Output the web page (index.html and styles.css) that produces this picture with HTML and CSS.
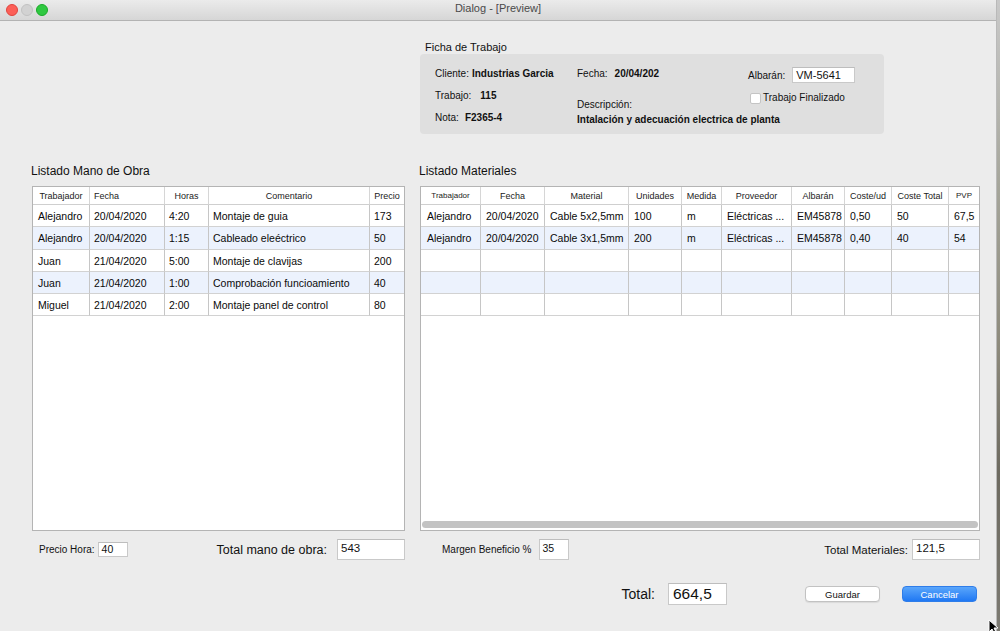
FILE: index.html
```html
<!DOCTYPE html>
<html lang="es">
<head>
<meta charset="utf-8">
<title>Dialog - [Preview]</title>
<link rel="stylesheet" href="styles.css">
</head>
<body>
<div class="screen">
  <div class="window">
    <header class="titlebar">
      <div class="lights">
        <span class="light red"></span><span class="light off"></span><span class="light green"></span>
      </div>
      <div class="title">Dialog - [Preview]</div>
    </header>
    <main class="content">
      <section class="ficha">
        <h2 class="ficha-title">Ficha de Trabajo</h2>
        <div class="ficha-box">
          <div class="fcol c1">
            <div class="line">Cliente:<b class="v v-cli">Industrias Garcia</b></div>
            <div class="line">Trabajo:<b class="v v-tra">115</b></div>
            <div class="line">Nota:<b class="v v-nota">F2365-4</b></div>
          </div>
          <div class="fcol c2">
            <div class="line">Fecha:<b class="v v-fecha">20/04/202</b></div>
            <div class="line desc-label">Descripción:</div>
            <div class="line desc"><b>Intalación y adecuación electrica de planta</b></div>
          </div>
          <div class="fcol c3">
            <div class="albaran"><span>Albarán:</span><span class="field f-alb">VM-5641</span></div>
            <div class="check"><span class="cbox"></span><span>Trabajo Finalizado</span></div>
          </div>
        </div>
      </section>

      <div class="lists">
        <section class="panel mano">
          <h3 class="panel-title">Listado Mano de Obra</h3>
          <div class="grid-box">
            <table class="grid">
              <colgroup>
                <col style="width:57px"><col style="width:75px"><col style="width:44px"><col style="width:161px"><col style="width:34px">
              </colgroup>
              <thead>
                <tr><th>Trabajador</th><th class="left">Fecha</th><th>Horas</th><th>Comentario</th><th>Precio</th></tr>
              </thead>
              <tbody>
                <tr><td>Alejandro</td><td>20/04/2020</td><td>4:20</td><td>Montaje de guia</td><td>173</td></tr>
                <tr class="alt tall"><td>Alejandro</td><td>20/04/2020</td><td>1:15</td><td>Cableado eleéctrico</td><td>50</td></tr>
                <tr><td>Juan</td><td>21/04/2020</td><td>5:00</td><td>Montaje de clavijas</td><td>200</td></tr>
                <tr class="alt"><td>Juan</td><td>21/04/2020</td><td>1:00</td><td>Comprobación funcioamiento</td><td>40</td></tr>
                <tr><td>Miguel</td><td>21/04/2020</td><td>2:00</td><td>Montaje panel de control</td><td>80</td></tr>
              </tbody>
            </table>
          </div>
        </section>

        <section class="panel mat">
          <h3 class="panel-title">Listado Materiales</h3>
          <div class="grid-box">
            <table class="grid">
              <colgroup>
                <col style="width:60px"><col style="width:64px"><col style="width:84px"><col style="width:53px"><col style="width:40px"><col style="width:70px"><col style="width:53px"><col style="width:47px"><col style="width:57px"><col style="width:30px">
              </colgroup>
              <thead>
                <tr><th class="tiny">Trabajador</th><th>Fecha</th><th>Material</th><th>Unidades</th><th>Medida</th><th>Proveedor</th><th>Albarán</th><th>Coste/ud</th><th>Coste Total</th><th class="tiny">PVP</th></tr>
              </thead>
              <tbody>
                <tr><td class="p6">Alejandro</td><td>20/04/2020</td><td>Cable 5x2,5mm</td><td>100</td><td>m</td><td>Eléctricas ...</td><td>EM45878</td><td>0,50</td><td>50</td><td>67,5</td></tr>
                <tr class="alt tall"><td class="p6">Alejandro</td><td>20/04/2020</td><td>Cable 3x1,5mm</td><td>200</td><td>m</td><td>Eléctricas ...</td><td>EM45878</td><td>0,40</td><td>40</td><td>54</td></tr>
                <tr><td></td><td></td><td></td><td></td><td></td><td></td><td></td><td></td><td></td><td></td></tr>
                <tr class="alt"><td></td><td></td><td></td><td></td><td></td><td></td><td></td><td></td><td></td><td></td></tr>
                <tr><td></td><td></td><td></td><td></td><td></td><td></td><td></td><td></td><td></td><td></td></tr>
              </tbody>
            </table>
            <div class="hscroll"></div>
          </div>
        </section>
      </div>

      <div class="totals">
        <div class="tot-left">
          <span class="lbl-s">Precio Hora:</span>
          <span class="field f-hora">40</span>
          <span class="lbl-m">Total mano de obra:</span>
          <span class="field f-big">543</span>
        </div>
        <div class="tot-right">
          <span class="lbl-s">Margen Beneficio %</span>
          <span class="field f-marg">35</span>
          <span class="lbl-mm">Total Materiales:</span>
          <span class="field f-big">121,5</span>
        </div>
      </div>

      <div class="footer">
        <span class="lbl-total">Total:</span>
        <span class="field f-total">664,5</span>
        <button class="btn">Guardar</button>
        <button class="btn primary">Cancelar</button>
      </div>
    </main>
  </div>
  <div class="desk"></div>
  <svg class="cursor" width="12" height="16" viewBox="0 0 12 16"><path d="M1 1 L1 13 L4 10 L6.5 15 L8.5 14 L6 9 L10 9 Z" fill="#000" stroke="#fff" stroke-width="1"/></svg>
</div>
</body>
</html>
```
FILE: styles.css
```css
* { box-sizing: border-box; }
html, body { margin: 0; padding: 0; }
body {
  font-family: "Liberation Sans", Arial, Helvetica, sans-serif;
  color: #111;
  background: #6e6c66;
  width: 1000px;
  height: 631px;
  overflow: hidden;
}
.screen {
  position: relative;
  display: flex;
  width: 1000px;
  height: 631px;
}
.window {
  width: 997px;
  height: 631px;
  background: #ececec;
  border-right: 1px solid #b9b9b9;
  display: flex;
  flex-direction: column;
}
.desk {
  flex: 1;
  background: linear-gradient(180deg, #c9c9c9 0%, #a5a59a 30%, #8d8a7c 55%, #6d6a60 75%, #7c7a72 100%);
}
.cursor { position: absolute; left: 988px; top: 619px; }

/* title bar */
.titlebar {
  height: 21px;
  flex: none;
  display: flex;
  align-items: center;
  position: relative;
  background: linear-gradient(180deg, #ebebeb 0%, #d6d6d6 100%);
  border-bottom: 1px solid #b3b3b3;
}
.lights { display: flex; gap: 3px; padding-left: 6px; }
.light { width: 12px; height: 12px; border-radius: 50%; display: block; }
.light.red { background: #fc5f57; border: 1px solid #e0443e; }
.light.off { background: #d2d2d2; border: 1px solid #c2c2c2; }
.light.green { background: #2fc841; border: 1px solid #1aab29; }
.title {
  position: absolute;
  left: 0; right: 0; top: 0;
  line-height: 17px;
  text-align: center;
  font-size: 11px;
  color: #4a4a4a;
  pointer-events: none;
}

/* content */
.content { flex: 1; display: flex; flex-direction: column; }

.ficha { margin: 19px 0 0 420px; width: 464px; }
.ficha-title {
  margin: 0 0 0 5px;
  font-size: 11px;
  font-weight: normal;
  line-height: 14px;
  color: #111;
}
.ficha-box {
  height: 80px;
  background: #dfdfdf;
  border-radius: 4px;
  padding: 13px 0 0 15px;
  display: flex;
  font-size: 10px;
}
.fcol { display: flex; flex-direction: column; }
.line { line-height: 14px; height: 14px; white-space: nowrap; }
.c1 { width: 142px; gap: 8px; }
.c2 { width: 171px; }
.c3 { flex: 1; }
.v { font-weight: bold; }
.v-cli { margin-left: 3px; }
.v-tra { margin-left: 9px; }
.v-nota { margin-left: 6px; }
.v-fecha { margin-left: 7px; }
.desc-label { margin-top: 17px; }
.desc { margin-top: 1px; }
.albaran { display: flex; align-items: center; height: 16px; }
.albaran .field { margin-left: 7px; }
.field {
  display: inline-block;
  background: #fff;
  border: 1px solid #c9c9c9;
  border-top-color: #bdbdbd;
  padding-left: 3px;
  color: #111;
  white-space: nowrap;
}
.f-alb { width: 63px; height: 16px; line-height: 15px; font-size: 11px; }
.check { display: flex; align-items: center; margin-top: 9px; margin-left: 2px; line-height: 12px; }
.cbox {
  width: 11px; height: 11px;
  background: #fff;
  border: 1px solid #c4c4c4;
  border-radius: 2px;
  margin-right: 2px;
}

/* lists */
.lists { display: flex; gap: 15px; margin: 30px 0 0 32px; }
.panel { display: flex; flex-direction: column; }
.mano { width: 373px; }
.mat { width: 560px; }
.panel-title {
  margin: 0 0 8px -1px;
  font-size: 12px;
  font-weight: normal;
  line-height: 14px;
  color: #111;
}
.grid-box {
  height: 345px;
  background: #fff;
  border: 1px solid #b4b4b4;
  display: flex;
  flex-direction: column;
  overflow: hidden;
}
.grid {
  border-collapse: separate;
  border-spacing: 0;
  table-layout: fixed;
  width: 100%;
}
.grid thead tr { height: 18px; }
.grid tbody tr { height: 22px; }
.grid tbody tr.tall { height: 23px; }
.grid th {
  font-size: 9px;
  font-weight: normal;
  color: #222;
  text-align: center;
  padding: 0 2px;
  border-right: 1px solid #d6d6d6;
  border-bottom: 1px solid #cfcfcf;
  white-space: nowrap;
  overflow: hidden;
}
.grid th.left { text-align: left; padding-left: 4px; }
.grid th.tiny { font-size: 8px; }
.grid td {
  font-size: 10.5px;
  color: #0a0a0a;
  padding: 0 2px 0 4px;
  border-right: 1px solid #c6c6c6;
  border-bottom: 1px solid #d2d2d2;
  white-space: nowrap;
  overflow: hidden;
}
.mano .grid td:first-child { padding-left: 5px; }
.mat .grid td { padding-left: 5px; }
.mat .grid td.p6 { padding-left: 6px; }
.grid th:last-child, .grid td:last-child { border-right: none; }
.grid tr.alt td { background: #ecf2fd; }

.hscroll {
  margin: auto 1px 2px 1px;
  height: 7px;
  border-radius: 4px;
  background: #c3c3c3;
}

/* totals */
.totals { display: flex; gap: 15px; margin: 8px 0 0 32px; height: 21px; }
.tot-left, .tot-right { display: flex; align-items: center; }
.tot-left { width: 373px; padding-left: 7px; }
.tot-right { width: 560px; padding-left: 22px; }
.lbl-s { font-size: 10px; color: #111; }
.lbl-m { font-size: 12.5px; color: #111; margin-left: auto; margin-right: 10px; }
.lbl-mm { font-size: 11.5px; color: #111; margin-left: auto; margin-right: 4px; }
.f-hora { width: 30px; height: 15px; line-height: 13px; font-size: 10.5px; margin-left: 3px; }
.f-big { width: 68px; height: 21px; line-height: 17px; font-size: 11.5px; }
.f-marg { width: 30px; height: 21px; line-height: 17px; font-size: 10.5px; margin-left: 7px; }

/* footer */
.footer {
  display: flex;
  align-items: center;
  justify-content: flex-end;
  width: 945px;
  margin: 23px 0 0 32px;
  height: 22px;
}
.lbl-total { font-size: 14px; color: #111; margin-right: 13px; }
.f-total { width: 59px; height: 22px; line-height: 19px; font-size: 15.5px; padding-left: 4px; }
.btn {
  font-family: inherit;
  font-size: 9.5px;
  height: 16px;
  width: 75px;
  padding: 0;
  border-radius: 4px;
  cursor: default;
}
.btn:not(.primary) {
  margin-left: 78px;
  background: #fff;
  color: #111;
  border: 1px solid #c2c2c2;
  box-shadow: 0 1px 1px rgba(0,0,0,0.08);
}
.btn.primary {
  margin-left: 22px;
  color: #fff;
  border: 1px solid #2f7de9;
  background: linear-gradient(180deg, #5aa6fb 0%, #2078f3 100%);
}
```
